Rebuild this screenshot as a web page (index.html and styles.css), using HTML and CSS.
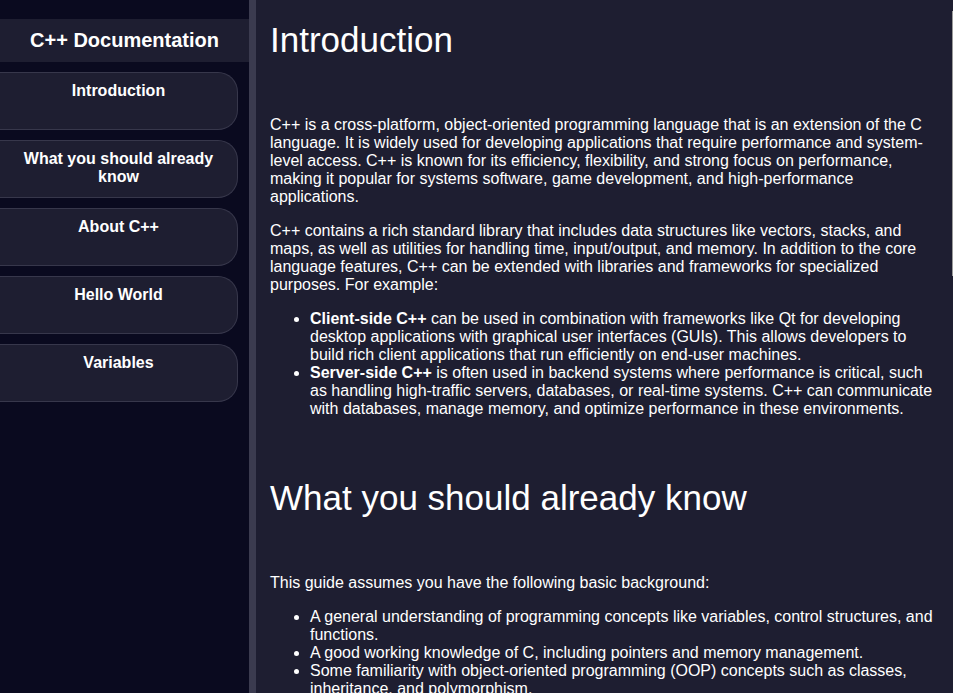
FILE: index.html
```html
<!DOCTYPE html>
<html lang="en">
<head>
<meta charset="utf-8">
<title>C++ Documentation</title>
<link rel="stylesheet" href="styles.css">
</head>
<body>
<div class="layout">
  <nav class="sidebar">
    <header class="sidebar-header">C++ Documentation</header>
    <ul class="nav-list">
      <li><a class="nav-link" href="#introduction">Introduction</a></li>
      <li><a class="nav-link" href="#what_you_should_already_know">What you should already know</a></li>
      <li><a class="nav-link" href="#about_cpp">About C++</a></li>
      <li><a class="nav-link" href="#hello_world">Hello World</a></li>
      <li><a class="nav-link" href="#variables">Variables</a></li>
    </ul>
  </nav>
  <main class="main">
    <section class="doc-section" id="introduction">
      <header><h1 class="section-title">Introduction</h1></header>
      <p>C++ is a cross-platform, object-oriented programming language that is an extension of the C language. It is widely used for developing applications that require performance and system-level access. C++ is known for its efficiency, flexibility, and strong focus on performance, making it popular for systems software, game development, and high-performance applications.</p>
      <p>C++ contains a rich standard library that includes data structures like vectors, stacks, and maps, as well as utilities for handling time, input/output, and memory. In addition to the core language features, C++ can be extended with libraries and frameworks for specialized purposes. For example:</p>
      <ul>
        <li><strong>Client-side C++</strong> can be used in combination with frameworks like Qt for developing desktop applications with graphical user interfaces (GUIs). This allows developers to build rich client applications that run efficiently on end-user machines.</li>
        <li><strong>Server-side C++</strong> is often used in backend systems where performance is critical, such as handling high-traffic servers, databases, or real-time systems. C++ can communicate with databases, manage memory, and optimize performance in these environments.</li>
      </ul>
    </section>
    <section class="doc-section" id="what_you_should_already_know">
      <header><h2 class="section-title">What you should already know</h2></header>
      <p>This guide assumes you have the following basic background:</p>
      <ul>
        <li>A general understanding of programming concepts like variables, control structures, and functions.</li>
        <li>A good working knowledge of C, including pointers and memory management.</li>
        <li>Some familiarity with object-oriented programming (OOP) concepts such as classes, inheritance, and polymorphism.</li>
      </ul>
    </section>
    <section class="doc-section" id="about_cpp">
      <header><h2 class="section-title">About C++</h2></header>
      <p>C++ was developed by Bjarne Stroustrup at Bell Labs in 1979 as an enhancement to the C language. It adds classes, templates, exceptions and many other features while keeping the low-level control that C provides.</p>
    </section>
    <section class="doc-section" id="hello_world">
      <header><h2 class="section-title">Hello World</h2></header>
      <p>To get started with writing C++, open a text editor and write your first "Hello world" program, then compile it with a C++ compiler such as g++ or clang++.</p>
    </section>
    <section class="doc-section" id="variables">
      <header><h2 class="section-title">Variables</h2></header>
      <p>You use variables as symbolic names for values in your application. The names of variables, called identifiers, conform to certain rules.</p>
    </section>
  </main>
  <div class="scroll-thumb" aria-hidden="true"></div>
</div>
</body>
</html>
```
FILE: styles.css
```css
html, body {
  margin: 0;
  padding: 0;
  height: 100%;
}

body {
  background: #1e1e31;
  color: #ffffff;
  font-family: "Liberation Sans", Arial, sans-serif;
  font-size: 16px;
}

.layout {
  display: grid;
  grid-template-columns: 256px 1fr;
  height: 100vh;
  position: relative;
}

.sidebar {
  background: #0a0a1f;
  border-right: 7px solid #3b3b4f;
  padding-top: 19px;
  overflow: hidden;
}

.sidebar-header {
  background: #1e1e31;
  font-size: 20px;
  font-weight: bold;
  text-align: center;
  padding: 10px 0;
  line-height: 23px;
}

.nav-list {
  list-style: none;
  margin: 10px 0 0;
  padding: 0 11px 0 0;
  display: flex;
  flex-direction: column;
  gap: 10px;
}

.nav-link {
  display: block;
  box-sizing: border-box;
  height: 58px;
  padding: 9px 10px;
  background: #1e1e31;
  border: 1px solid #37374b;
  border-left: none;
  border-radius: 0 20px 20px 0;
  color: #ffffff;
  text-decoration: none;
  font-weight: bold;
  text-align: center;
  line-height: 18px;
}

.main {
  overflow-y: scroll;
  padding: 0 14px 0 14px;
  scrollbar-width: none;
}

.main::-webkit-scrollbar {
  display: none;
}

.scroll-thumb {
  position: absolute;
  top: 11px;
  right: 0;
  width: 1px;
  height: 265px;
  background: #9a9a9a;
}

.doc-section {
  margin-bottom: 60px;
}

.section-title {
  font-size: 35px;
  font-weight: normal;
  margin: 20px 0 56px;
}

.doc-section p {
  margin: 16px 0;
}

.doc-section ul {
  margin: 16px 0;
  padding-left: 40px;
}
```
